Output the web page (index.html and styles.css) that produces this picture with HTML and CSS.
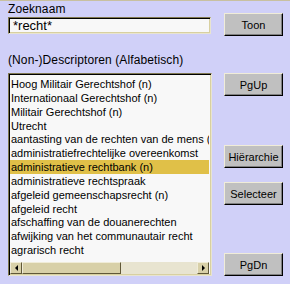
FILE: index.html
```html
<!DOCTYPE html>
<html lang="nl">

<head>
  <meta charset="UTF-8" />
  <title>Zoeken</title>
  <link rel="stylesheet" href="styles.css">
</head>

<body>
  <div class="panel">
    <div class="left">
      <div class="label">Zoeknaam</div>
      <div class="field">*recht*</div>
      <div class="label descr">(Non-)Descriptoren (Alfabetisch)</div>

      <div class="list">
        <div class="items">
          <div class="item">Hoog Militair Gerechtshof (n)</div>
          <div class="item">Internationaal Gerechtshof (n)</div>
          <div class="item">Militair Gerechtshof (n)</div>
          <div class="item">Utrecht</div>
          <div class="item">aantasting van de rechten van de mens (n)</div>
          <div class="item">administratiefrechtelijke overeenkomst</div>
          <div class="item selected">administratieve rechtbank (n)</div>
          <div class="item">administratieve rechtspraak</div>
          <div class="item">afgeleid gemeenschapsrecht (n)</div>
          <div class="item">afgeleid recht</div>
          <div class="item">afschaffing van de douanerechten</div>
          <div class="item">afwijking van het communautair recht</div>
          <div class="item">agrarisch recht</div>
        </div>
        <div class="hscroll">
          <div class="arrow"><span class="tri-left"></span></div>
          <div class="thumb"></div>
          <div class="track"></div>
          <div class="arrow"><span class="tri-right"></span></div>
        </div>
      </div>
    </div>

    <div class="right">
      <button class="btn toon">Toon</button>
      <button class="btn pgup">PgUp</button>
      <button class="btn hier">Hiërarchie</button>
      <button class="btn sel">Selecteer</button>
      <button class="btn pgdn">PgDn</button>
    </div>
  </div>
</body>

</html>
```

FILE: styles.css
```css
* {
  box-sizing: border-box;
  margin: 0;
  padding: 0;
}

html,
body {
  width: 290px;
  height: 284px;
  overflow: hidden;
}

body {
  font-family: 'Liberation Sans', Arial, sans-serif;
  font-size: 12px;
  color: #000;
  background: #d0d0f8;
  border-top: 1px solid #c8c0a0;
}

.panel {
  display: flex;
  padding-left: 8px;
}

.left {
  width: 204px;
}

.label {
  height: 16px;
  line-height: 16px;
  font-size: 12px;
  letter-spacing: 0.1px;
}

.descr {
  margin-top: 18px;
}

/* text field */
.field {
  width: 203px;
  height: 17px;
  line-height: 13px;
  padding: 1px 4px;
  font-size: 13px;
  background: #f8f8f8;
  border: 1px solid;
  border-color: #807850 #e8e4d0 #e8e4d0 #807850;
  box-shadow: inset 1px 1px 0 #000, inset -1px -1px 0 #d8d0a0;
}

/* list box */
.list {
  margin-top: 5px;
  width: 204px;
  height: 203px;
  background: #f8f8f8;
  border: 1px solid;
  border-color: #807850 #e8e4d0 #e8e4d0 #807850;
  box-shadow: inset 1px 1px 0 #000, inset -1px -1px 0 #d8d0a0;
  padding: 2px 2px 1px 1px;
  display: flex;
  flex-direction: column;
}

.items {
  flex: 1;
  overflow: hidden;
  padding-top: 1px;
}

.item {
  height: 13.85px;
  line-height: 14px;
  font-size: 11px;
  padding-left: 1px;
  white-space: nowrap;
}

.item.selected {
  background: #e0c048;
}

.hscroll {
  display: flex;
  height: 12px;
  background: #e8e4d0;
}

.arrow,
.thumb {
  background: #d8d0a8;
  border: 1px solid;
  border-color: #f0ecd8 #605838 #605838 #f0ecd8;
}

.arrow {
  width: 12px;
  display: flex;
  align-items: center;
  justify-content: center;
}

.thumb {
  width: 99px;
}

.track {
  flex: 1;
}

.tri-left {
  border-top: 3px solid transparent;
  border-bottom: 3px solid transparent;
  border-right: 3px solid #000;
}

.tri-right {
  border-top: 3px solid transparent;
  border-bottom: 3px solid transparent;
  border-left: 3px solid #000;
}

/* buttons */
.right {
  display: flex;
  flex-direction: column;
  margin-left: 12px;
}

.btn {
  width: 59px;
  height: 23px;
  font-family: 'Liberation Sans', Arial, sans-serif;
  font-size: 11px;
  color: #000;
  background: #c0c0c0;
  border: 1px solid;
  border-color: #f0ecd8 #000 #000 #f0ecd8;
  box-shadow: inset -1px -1px 0 #808080;
}

.toon {
  margin-top: 12px;
}

.pgup {
  margin-top: 37px;
}

.hier {
  margin-top: 49px;
}

.sel {
  margin-top: 14px;
}

.pgdn {
  margin-top: 48px;
}
```
